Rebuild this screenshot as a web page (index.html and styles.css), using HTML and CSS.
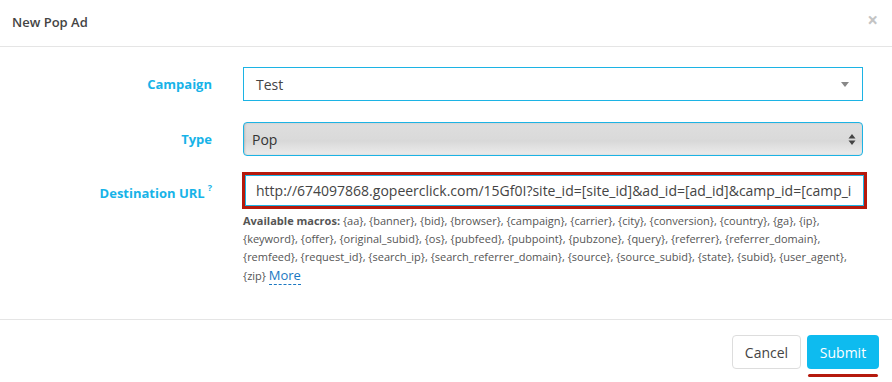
FILE: index.html
```html
<!DOCTYPE html>
<html>
<head>
<meta charset="utf-8">
<link rel="stylesheet" href="styles.css">
</head>
<body>
<div class="modal">
  <div class="modal-header">
    <div class="modal-title">New Pop Ad</div>
    <div class="close">×</div>
  </div>
  <div class="modal-body">
    <div class="row">
      <div class="label">Campaign</div>
      <div class="field">
        <div class="select chosen"><span>Test</span><span class="caret"></span></div>
      </div>
    </div>
    <div class="row">
      <div class="label">Type</div>
      <div class="field">
        <div class="select native"><span>Pop</span>
          <svg class="updown" width="8" height="13" viewBox="0 0 8 13"><path d="M4 1 L7.5 5.5 H0.5 Z M4 12 L7.5 7.5 H0.5 Z" fill="#444"/></svg>
        </div>
      </div>
    </div>
    <div class="row url-row">
      <div class="label">Destination URL<sup>?</sup></div>
      <div class="field">
        <div class="input highlight"><div class="url">http://674097868.gopeerclick.com/15Gf0I?site_id=[site_id]&amp;ad_id=[ad_id]&amp;camp_id=[camp_id]</div></div>
        <div class="help"><b>Available macros:</b> {aa}, {banner}, {bid}, {browser}, {campaign}, {carrier}, {city}, {conversion}, {country}, {ga}, {ip}, {keyword}, {offer}, {original_subid}, {os}, {pubfeed}, {pubpoint}, {pubzone}, {query}, {referrer}, {referrer_domain}, {remfeed}, {request_id}, {search_ip}, {search_referrer_domain}, {source}, {source_subid}, {state}, {subid}, {user_agent}, {zip} <span class="more">More</span></div>
      </div>
    </div>
  </div>
  <div class="modal-footer">
    <div class="btn cancel">Cancel</div>
    <div class="btn submit">Submit</div>
  </div>
</div>
</body>
</html>
```
FILE: styles.css
```css
* { box-sizing: border-box; }
html, body { margin: 0; padding: 0; background: #fff; }
body { font-family: "Open Sans", "Noto Sans", sans-serif; color: #555; width: 892px; height: 382px; overflow: hidden; }
.modal { width: 892px; }
.modal-header { height: 47px; border-bottom: 1px solid #e5e5e5; display: flex; align-items: center; justify-content: space-between; padding: 0 12px 2px 12px; }
.modal-title { font-size: 13px; font-weight: 600; color: #444; }
.close { font-size: 19px; font-weight: 700; color: #c4c4c4; line-height: 1; margin-right: 2px; margin-top: -4px; }
.modal-body { height: 272px; padding-top: 20px; }
.row { display: grid; grid-template-columns: 212px 620px; column-gap: 31px; margin-bottom: 21px; align-items: start; }
.label { text-align: right; font-size: 13px; font-weight: 700; color: #17b3e8; line-height: 34px; }
.label sup { font-size: 9px; margin-left: 3px; position: relative; top: -2px; }
.select, .input { height: 34px; border: 1px solid #1cb3e4; display: flex; align-items: center; justify-content: space-between; font-size: 14px; color: #444; }
.chosen { padding: 0 12px 0 12px; background: #fff; }
.caret { width: 0; height: 0; border-left: 4px solid transparent; border-right: 4px solid transparent; border-top: 5px solid #888; margin-top: 1px; margin-right: 1px; }
.native { border-radius: 4px; padding: 0 6px 0 8px; background: linear-gradient(#dedede, #dadada 50%, #d8d8d8 55%, #ececec); box-shadow: inset 1px 0 2px rgba(0,0,0,0.15); color: #333; }
.updown { display: block; }
.url-row { margin-top: -5px; }
.url-row .label { line-height: 36px; }
.input.highlight { height: 37px; border: 3px solid #b5190d; box-shadow: inset 0 0 0 1px #1cb3e4; padding: 0 13px 0 11px; justify-content: flex-start; margin-left: -1px; width: 625px; }
.url { font-size: 14px; color: #444; white-space: nowrap; overflow: hidden; width: 100%; }
.help { font-size: 11px; line-height: 18px; color: #555; margin-top: 3px; }
.help b { color: #555; font-weight: 700; }
.more { font-size: 13px; color: #1a78c2; border-bottom: 1px dashed #1a78c2; }
.modal-footer { height: 63px; border-top: 1px solid #e5e5e5; display: flex; justify-content: flex-end; align-items: flex-start; padding: 15px 13px 0 0; gap: 6px; }
.btn { height: 34px; border-radius: 4px; font-size: 14px; display: flex; align-items: center; justify-content: center; }
.cancel { width: 69px; border: 1px solid #ddd; color: #444; background: #fff; }
.submit { width: 72px; background: #0ebbef; color: #fff; position: relative; }
.submit::after { content: ""; position: absolute; left: 1px; right: 1px; bottom: -8px; height: 3px; background: #b5190d; border-radius: 2px; }
```
